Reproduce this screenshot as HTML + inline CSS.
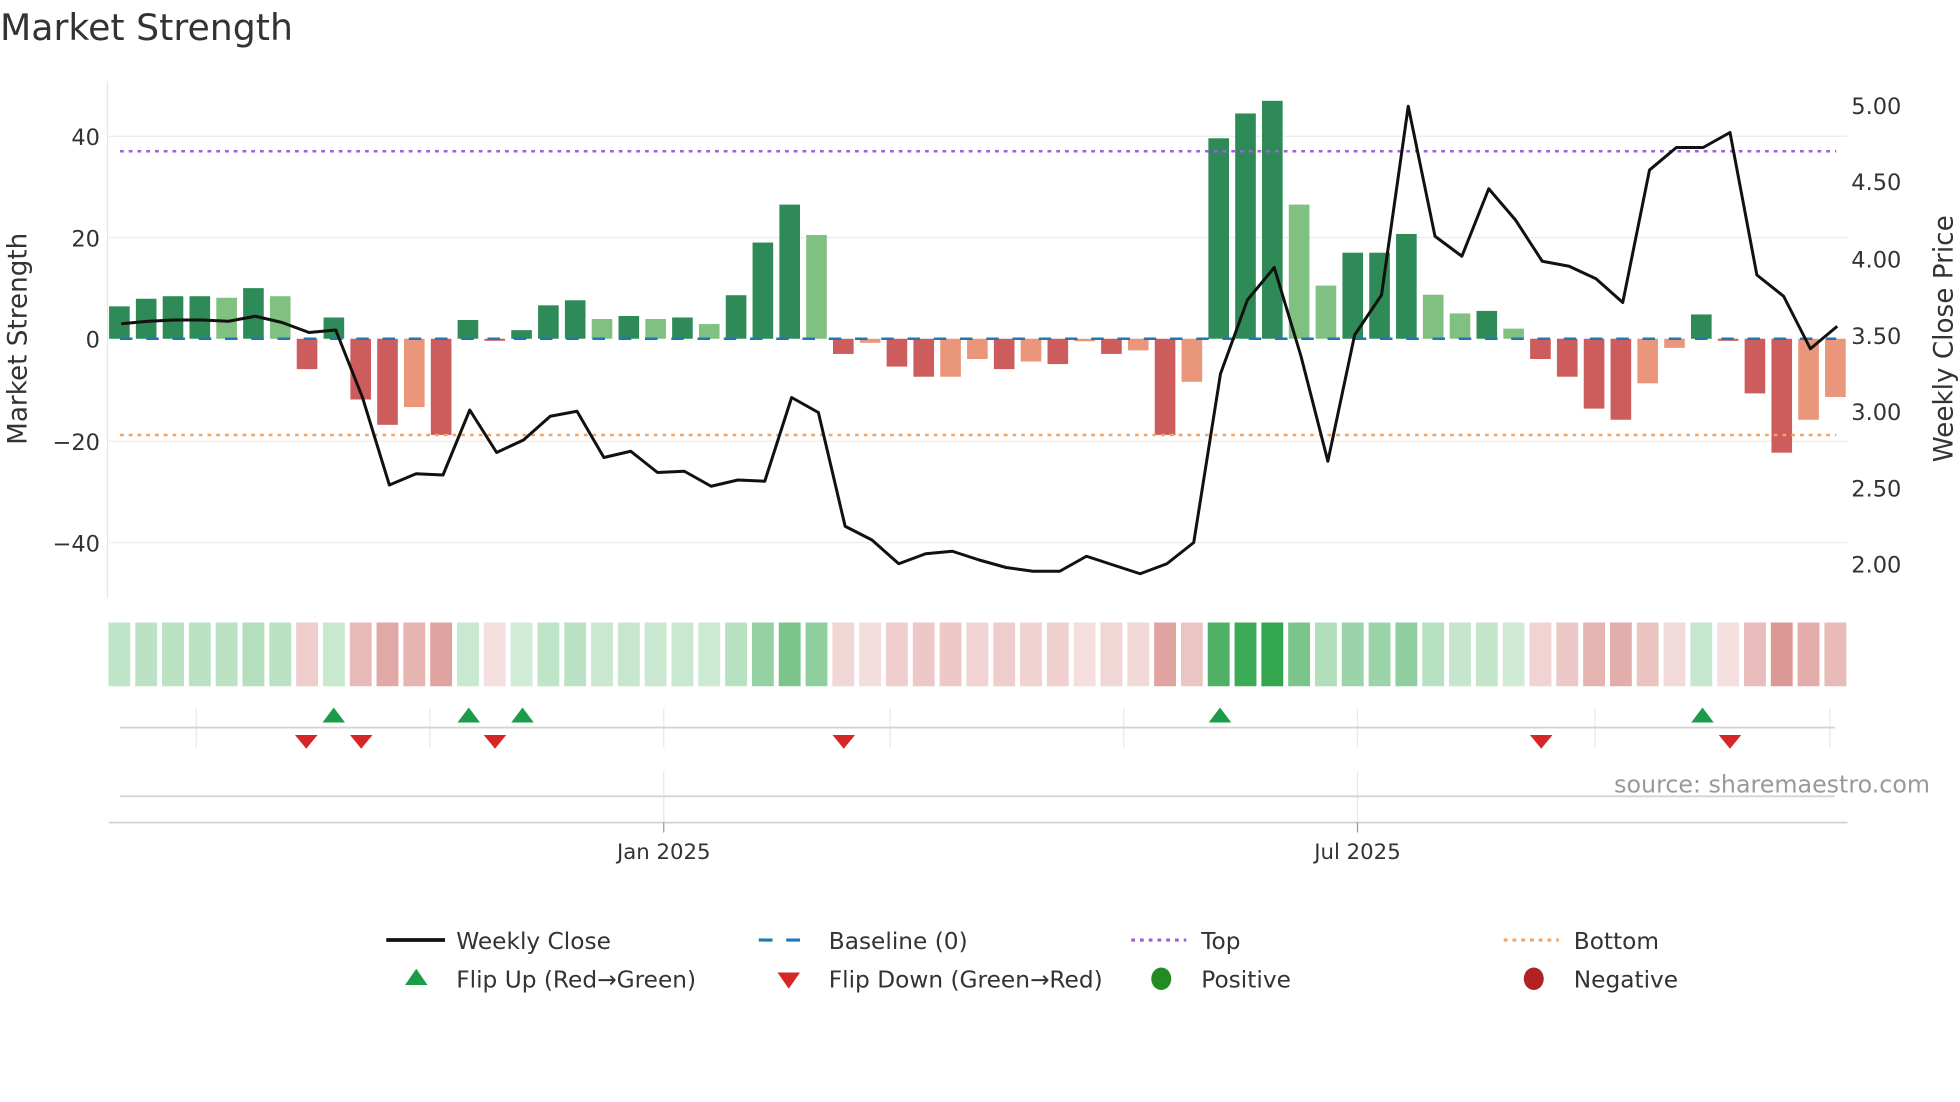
<!DOCTYPE html>
<html><head><meta charset="utf-8">
<style>
html,body{margin:0;padding:0;background:#fff;}
svg{display:block;font-family:"DejaVu Sans","Liberation Sans",sans-serif;}
</style></head>
<body>
<svg id="c" width="1960" height="1102" viewBox="0 0 1568 881.6" xmlns="http://www.w3.org/2000/svg">
<rect width="1568" height="882" fill="#fff"/>
<text x="0" y="32" font-size="29" fill="#333">Market Strength</text>
<g stroke="#ececec" stroke-width="1">
<line x1="87" x2="1478" y1="109" y2="109"/><line x1="87" x2="1478" y1="190" y2="190"/>
<line x1="87" x2="1478" y1="353" y2="353"/><line x1="87" x2="1478" y1="434" y2="434"/>
</g>
<line x1="86" x2="86" y1="65" y2="478" stroke="#e6e6e6"/>
<g font-size="18" fill="#333" text-anchor="end">
<text x="80" y="116">40</text><text x="80" y="197">20</text><text x="80" y="278">0</text>
<text x="80" y="360">−20</text><text x="80" y="441">−40</text>
</g>
<g font-size="18" fill="#333">
<text x="1481" y="91">5.00</text><text x="1481" y="152">4.50</text><text x="1481" y="214">4.00</text>
<text x="1481" y="275">3.50</text><text x="1481" y="336">3.00</text><text x="1481" y="397">2.50</text>
<text x="1481" y="458">2.00</text>
</g>
<text transform="translate(21,271) rotate(-90)" font-size="21" fill="#333" text-anchor="middle">Market Strength</text>
<text transform="translate(1562,271) rotate(-90)" font-size="21" fill="#333" text-anchor="middle">Weekly Close Price</text>
<g id="bars"></g>
<line x1="96" x2="1469" y1="271" y2="271" stroke="#1f77b4" stroke-width="2" stroke-dasharray="10,11"/>
<line x1="96" x2="1469" y1="121" y2="121" stroke="#9b5fe0" stroke-width="2" stroke-dasharray="3,4"/>
<line x1="96" x2="1469" y1="348" y2="348" stroke="#f4a460" stroke-width="2" stroke-dasharray="3,4"/>
<polyline id="price" fill="none" stroke="#111" stroke-width="2.4" stroke-linejoin="round"/>
<g id="heat"></g>
<g stroke="#e8e8e8" stroke-width="1" id="vt"></g>
<line x1="96" x2="1468" y1="582" y2="582" stroke="#d4d4d4" stroke-width="1.5"/>
<g id="marks"></g>
<line x1="531" x2="531" y1="617" y2="660" stroke="#e8e8e8"/>
<line x1="1086" x2="1086" y1="617" y2="660" stroke="#e8e8e8"/>
<line x1="96" x2="1468" y1="637" y2="637" stroke="#d4d4d4" stroke-width="1.5"/>
<line x1="87" x2="1478" y1="658" y2="658" stroke="#d4d4d4" stroke-width="1.5"/>
<line x1="531" x2="531" y1="658" y2="666" stroke="#999"/>
<line x1="1086" x2="1086" y1="658" y2="666" stroke="#999"/>
<g font-size="17" fill="#333" text-anchor="middle">
<text x="531" y="687">Jan 2025</text><text x="1086" y="687">Jul 2025</text>
</g>
<text x="1544" y="634" font-size="19" fill="#999" text-anchor="end">source: sharemaestro.com</text>
<g font-size="18.6" fill="#333">
<line x1="309" x2="356" y1="752" y2="752" stroke="#111" stroke-width="3"/>
<text x="365" y="759">Weekly Close</text>
<line x1="607" x2="651" y1="752" y2="752" stroke="#1f77b4" stroke-width="2.5" stroke-dasharray="11,11"/>
<text x="663" y="759">Baseline (0)</text>
<line x1="905" x2="949" y1="752" y2="752" stroke="#9b5fe0" stroke-width="2.5" stroke-dasharray="3,4"/>
<text x="961" y="759">Top</text>
<line x1="1203" x2="1247" y1="752" y2="752" stroke="#f4a460" stroke-width="2.5" stroke-dasharray="3,4"/>
<text x="1259" y="759">Bottom</text>
<polygon points="324,788 342,788 333,775" fill="#1a9c48"/>
<text x="365" y="790">Flip Up (Red→Green)</text>
<polygon points="622,778 640,778 631,791" fill="#d62728"/>
<text x="663" y="790">Flip Down (Green→Red)</text>
<ellipse cx="929" cy="783" rx="8" ry="9" fill="#228b22"/>
<text x="961" y="790">Positive</text>
<ellipse cx="1227" cy="783" rx="8" ry="9" fill="#b22222"/>
<text x="1259" y="790">Negative</text>
</g>
</svg>
<script>
var NS="http://www.w3.org/2000/svg";
function el(p,t,a){var e=document.createElementNS(NS,t);for(var k in a)e.setAttribute(k,a[k]);p.appendChild(e);return e;}
var v=[6.4,7.9,8.4,8.4,8.1,10,8.4,-6,4.2,-12,-17,-13.5,-19,3.7,-0.4,1.7,6.6,7.6,3.9,4.5,3.9,4.2,2.9,8.6,19,26.5,20.5,-3,-0.8,-5.5,-7.5,-7.5,-4,-6,-4.5,-5,-0.5,-3,-2.3,-19,-8.5,39.6,44.5,47,26.5,10.5,17,17,20.7,8.7,5,5.5,2,-4,-7.5,-13.8,-16,-8.8,-1.8,4.8,-0.4,-10.8,-22.5,-16,-11.5];
var flags=[1,1,1,1,0,1,0,1,1,1,1,0,1,1,1,1,1,1,0,1,0,1,0,1,1,1,0,1,0,1,1,0,0,1,0,1,0,1,0,1,0,1,1,1,0,0,1,1,1,0,0,1,0,1,1,1,1,0,0,1,1,1,1,0,0];
var bars=document.getElementById('bars'),heat=document.getElementById('heat');
var s=21.45,x0=95.5,bw=16.5;
function mix(a,b,t){var r='#';for(var i=0;i<3;i++){var c=Math.round(a[i]+(b[i]-a[i])*t);r+=('0'+c.toString(16)).slice(-2);}return r;}
for(var i=0;i<v.length;i++){
 var cx=x0+i*s,val=v[i],h=val*4.05,y=val>=0?271-h:271;
 var col=val>=0?(flags[i]?'#2e8b57':'#80c080'):(flags[i]?'#cd5c5c':'#e9967a');
 el(bars,'rect',{x:cx-bw/2,y:y,width:bw,height:Math.max(Math.abs(h),1),fill:col});
 var hc=val>=0?mix([214,238,219],[52,166,80],Math.min(val/47,1)):mix([245,224,224],[218,150,146],Math.min(-val/23,1));
 el(heat,'rect',{x:cx-8.75,y:498,width:17.5,height:51,fill:hc});
}
var p=[259,257,256,256,257,253,258,266,264,318,388,379,380,328,362,352,333,329,366,361,378,377,389,384,385,318,330,421,432,451,443,441,448,454,457,457,445,452,459,451,434,299,240,214,285,369,268,236,85,189,205,151,176,209,213,223,242,136,118,118,106,220,237,279,261];
var pts=[];for(var i=0;i<p.length;i++){pts.push((97+i*21.45).toFixed(1)+','+p[i]);}
document.getElementById('price').setAttribute('points',pts.join(' '));
var vt=document.getElementById('vt');
[157,344,531,712,899,1086,1276,1464].forEach(function(x){el(vt,'line',{x1:x,x2:x,y1:567,y2:598});});
var m=document.getElementById('marks');
[267,375,418,976,1362].forEach(function(x){el(m,'polygon',{points:(x-9)+',578 '+(x+9)+',578 '+x+',566',fill:'#1a9c48'});});
[245,289,396,675,1233,1384].forEach(function(x){el(m,'polygon',{points:(x-9)+',588 '+(x+9)+',588 '+x+',599',fill:'#d62728'});});
</script>
</body></html>
